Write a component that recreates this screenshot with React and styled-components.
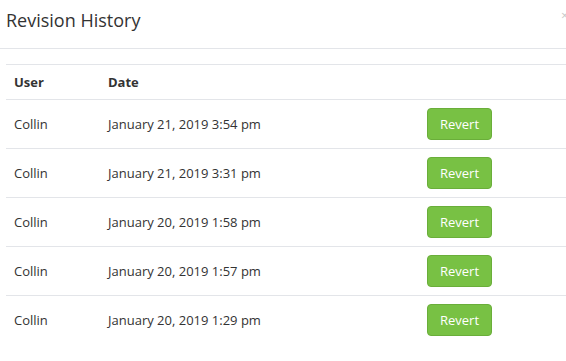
import React from "react";
import styled, { createGlobalStyle } from "styled-components";

const GlobalStyle = createGlobalStyle`
  body {
    margin: 0;
    background: #fff;
    font-family: "Open Sans", "Liberation Sans", sans-serif;
    color: #333;
  }
`;

const Modal = styled.div`
  width: 566px;
  height: 361px;
  overflow: hidden;
  position: relative;
  background: #fff;
`;

const Header = styled.div`
  height: 49px;
  box-sizing: border-box;
  padding: 8px 6px 0;
  border-bottom: 1px solid #e3e5e9;
`;

const Title = styled.h4`
  margin: 0;
  font-size: 18px;
  font-weight: 400;
  line-height: 24px;
  color: #333;
`;

const Close = styled.span`
  position: absolute;
  top: 5px;
  left: 561px;
  font-size: 13px;
  color: #c8c8c8;
  line-height: 20px;
`;

const Body = styled.div`
  padding: 15px 0 0 6px;
`;

const Table = styled.table`
  width: 560px;
  border-collapse: collapse;
  table-layout: fixed;
  border-top: 1px solid #e3e5e9;
`;

const Th = styled.th`
  width: ${(p) => p.$w || "auto"};
  text-align: left;
  font-size: 13px;
  font-weight: 700;
  height: 35px;
  padding: 0 8px;
  box-sizing: border-box;
  border-bottom: 1px solid #e3e5e9;
  color: #333;
`;

const Row = styled.tr`
  &:last-child td {
    border-bottom: none;
  }
`;

const Td = styled.td`
  font-size: 13px;
  height: 49px;
  padding: 0 8px;
  box-sizing: border-box;
  border-bottom: 1px solid #e3e5e9;
  color: #333;
  vertical-align: middle;
`;

const RevertButton = styled.button`
  width: 65px;
  height: 32px;
  background: #78c144;
  border: 1px solid #6aae3a;
  border-radius: 4px;
  color: #fff;
  font-family: inherit;
  font-size: 13px;
  padding: 0;
  display: block;
`;

const revisions = [
  { user: "Collin", date: "January 21, 2019 3:54 pm" },
  { user: "Collin", date: "January 21, 2019 3:31 pm" },
  { user: "Collin", date: "January 20, 2019 1:58 pm" },
  { user: "Collin", date: "January 20, 2019 1:57 pm" },
  { user: "Collin", date: "January 20, 2019 1:29 pm" },
];

const App = () => {
  return (
    <Modal>
      <GlobalStyle />
      <Header>
        <Title>Revision History</Title>
      </Header>
      <Close>×</Close>
      <Body>
        <Table>
          <thead>
            <tr>
              <Th $w="94px">User</Th>
              <Th $w="319px">Date</Th>
              <Th />
            </tr>
          </thead>
          <tbody>
            {revisions.map((r, i) => (
              <Row key={i}>
                <Td>{r.user}</Td>
                <Td>{r.date}</Td>
                <Td>
                  <RevertButton>Revert</RevertButton>
                </Td>
              </Row>
            ))}
          </tbody>
        </Table>
      </Body>
    </Modal>
  );
};

export default App;
